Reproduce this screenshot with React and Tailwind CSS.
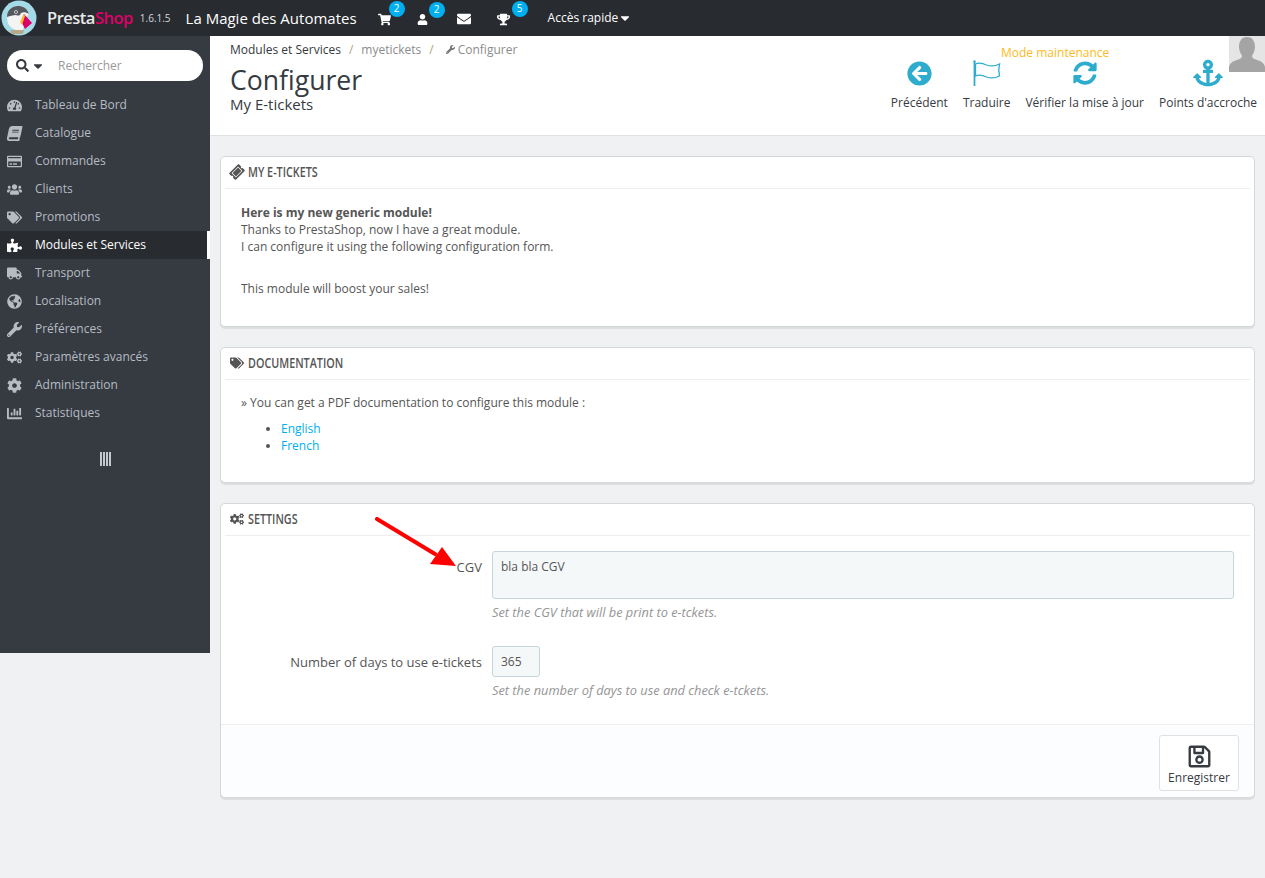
import {
  FaTachometerAlt, FaBook, FaRegCreditCard, FaUsers, FaTags, FaPuzzlePiece, FaTruck, FaGlobeAmericas,
  FaWrench, FaCogs, FaCog, FaChartBar, FaTicketAlt, FaArrowCircleLeft, FaSyncAlt, FaAnchor, FaRegSave,
  FaShoppingCart, FaUser, FaEnvelope, FaTrophy, FaSearch, FaCaretDown,
} from 'react-icons/fa';

const menu = [
  { label: 'Tableau de Bord', icon: FaTachometerAlt },
  { label: 'Catalogue', icon: FaBook, iconClass: '-skew-x-12' },
  { label: 'Commandes', icon: FaRegCreditCard },
  { label: 'Clients', icon: FaUsers },
  { label: 'Promotions', icon: FaTags },
  { label: 'Modules et Services', icon: FaPuzzlePiece, active: true },
  { label: 'Transport', icon: FaTruck },
  { label: 'Localisation', icon: FaGlobeAmericas },
  { label: 'Préférences', icon: FaWrench },
  { label: 'Paramètres avancés', icon: FaCogs },
  { label: 'Administration', icon: FaCog },
  { label: 'Statistiques', icon: FaChartBar },
];

const Logo = () => (
  <svg width="36" height="36" viewBox="0 0 36 36" className="shrink-0">
    <circle cx="18" cy="18" r="17.5" fill="#a4dbe8" />
    <path d="M6 18c0-8 5-12 11-12 6 0 10 3 11 8l-3 4-3 12c-8 2-16-3-16-12z" fill="#f4f4f4" />
    <path d="M6 17c0-7 5-11 11-11 5 0 9 2 11 8-3-2-6-2-8-1-1 3-3 3-5 2-3 0-6 1-9 2z" fill="#55585c" />
    <circle cx="15" cy="12" r="1.8" fill="#fff" />
    <circle cx="15" cy="12" r=".9" fill="#222" />
    <path d="M23 14l8 9-7 6-4-8z" fill="#df0067" />
    <path d="M23 14l-4 8 2 3 3-9z" fill="#fbbb22" />
    <path d="M9 30h14l-1 4H11z" fill="#b9a98a" />
  </svg>
);

const TopIcon = ({ icon: Icon, size, badge, badgeClass, className }) => (
  <div className={`relative mt-[2px] flex items-center ${className}`}>
    <Icon className="text-white" style={{ fontSize: size }} />
    {badge && (
      <span className={`absolute -top-[12px] flex h-4 w-4 items-center justify-center rounded-full bg-[#00aff0] text-[10px] text-white ${badgeClass}`}>
        {badge}
      </span>
    )}
  </div>
);

const ToolbarButton = ({ label, children }) => (
  <div className="flex flex-col items-center">
    <div className="flex h-[32px] items-center text-[#2eacce]">{children}</div>
    <span className="mt-[5px] text-[12px] leading-[17px] text-[#363a41]">{label}</span>
  </div>
);

const Panel = ({ icon: Icon, iconClass, title, children, className }) => (
  <section className={`rounded-[5px] border border-[#d3d8db] bg-white shadow-[0_2px_0_rgba(0,0,0,0.08)] ${className}`}>
    <h3 className="mx-[4px] flex h-[32px] items-center gap-[4px] border-b border-[#eeeeee] pb-[2px] pl-[5px] text-[14px] font-semibold uppercase text-[#555555]">
      <Icon className={`text-[14px] ${iconClass || ''}`} />
      <span className="origin-left scale-x-[0.77]">{title}</span>
    </h3>
    {children}
  </section>
);

export default function App() {
  return (
    <div className="flex min-h-[878px] flex-col overflow-hidden bg-[#eff1f2] text-[12px] text-[#555555] [font-family:'Open_Sans',sans-serif]">
      <header className="flex h-[36px] items-center bg-[#282b30] pl-px">
        <Logo />
        <span className="ml-[10px] text-[16.5px] font-semibold tracking-[-0.5px] text-[#e8e8e8]">
          Presta<span className="text-[#df0067]">Shop</span>
        </span>
        <span className="ml-[7px] text-[10px] text-[#d5d8dc]">1.6.1.5</span>
        <span className="ml-[15px] text-[15px] text-white">La Magie des Automates</span>
        <TopIcon icon={FaShoppingCart} size={13} badge="2" badgeClass="left-[11px]" className="ml-[21px] w-[39px]" />
        <TopIcon icon={FaUser} size={11} badge="2" badgeClass="left-[12px]" className="w-[40px]" />
        <TopIcon icon={FaEnvelope} size={14} className="w-[40px]" />
        <TopIcon icon={FaTrophy} size={13} badge="5" badgeClass="left-[15px]" className="w-[51px]" />
        <span className="flex items-center text-[12px] text-white">
          Accès rapide <FaCaretDown className="text-[14px]" />
        </span>
      </header>

      <div className="flex flex-1 items-start">
        <aside className="h-[617px] w-[210px] shrink-0 bg-[#363a41] pt-[14px]">
          <div className="mx-[7px] flex h-[31px] items-center rounded-full bg-white pl-[9px]">
            <FaSearch className="text-[13px] text-[#363a41]" />
            <FaCaretDown className="ml-[2px] text-[14px] text-[#363a41]" />
            <span className="ml-[13px] text-[12px] text-[#999999]">Rechercher</span>
          </div>
          <nav className="mt-[10px]">
            {menu.map(({ label, icon: Icon, iconClass, active }) => (
              <div
                key={label}
                className={`flex h-[28px] items-center ${active ? 'border-r-[3px] border-white bg-[#282b30] text-white' : 'text-[#b5bcc3]'}`}
              >
                <span className="flex w-[35px] justify-center pr-[6px]">
                  <Icon className={`text-[15px] ${active ? 'text-white' : 'text-[#b5bcc3]'} ${iconClass || ''}`} />
                </span>
                <span>{label}</span>
              </div>
            ))}
          </nav>
          <div className="mt-[25px] flex justify-center gap-px">
            <i className="h-[14px] w-[2px] bg-[#c4c9ce]" />
            <i className="h-[14px] w-[2px] bg-[#c4c9ce]" />
            <i className="h-[14px] w-[2px] bg-[#c4c9ce]" />
            <i className="h-[14px] w-[2px] bg-[#c4c9ce]" />
          </div>
        </aside>

        <main className="relative min-w-0 flex-1">
          <div className="relative flex h-[100px] justify-between border-b border-[#dfe2e4] bg-white pl-[20px] pr-[8px]">
            <div>
              <div className="flex items-center pt-[5px] text-[12px] leading-[17px] text-[#8c8c8c]">
                <span className="text-[#363a41]">Modules et Services</span>
                <span className="mx-[8px] text-[#a8a878]">/</span>
                <span>myetickets</span>
                <span className="ml-[8px] mr-[12px] text-[#a8a878]">/</span>
                <FaWrench className="mr-[3px] text-[9px] text-[#777777]" />
                <span>Configurer</span>
              </div>
              <h1 className="mt-[6px] text-[26.6px] leading-[32px] text-[#363a41]">Configurer</h1>
              <h2 className="text-[15px] leading-[16px] text-[#363a41]">My E-tickets</h2>
            </div>
            <div className="flex gap-[15px] pt-[21px]">
              <ToolbarButton label="Précédent">
                <FaArrowCircleLeft className="text-[25px]" />
              </ToolbarButton>
              <ToolbarButton label="Traduire">
                <svg width="28" height="26" viewBox="0 0 28 26" fill="none" stroke="currentColor">
                  <circle cx="1.5" cy="1.5" r="1.2" fill="currentColor" stroke="none" />
                  <path d="M1.5 2v24" strokeWidth="1.8" />
                  <path d="M2.5 4c4-2 7-1 11 1 4 1.500 8 1.500 13-1-1 4-1 8 0 12-5 2.500-9 2.500-13 1-4-2-7-3-11-1z" strokeWidth="1.3" />
                </svg>
              </ToolbarButton>
              <ToolbarButton label="Vérifier la mise à jour">
                <FaSyncAlt className="text-[24px]" />
              </ToolbarButton>
              <ToolbarButton label="Points d'accroche">
                <FaAnchor className="text-[30px]" />
              </ToolbarButton>
            </div>
            <span className="absolute left-[791px] top-[8px] text-[12px] leading-[17px] text-[#fbbb22]">Mode maintenance</span>
            <div className="absolute right-0 top-0 flex h-[36px] w-[36px] items-end justify-center overflow-hidden bg-[#e5e5e5]">
              <svg width="36" height="36" viewBox="0 0 36 36" fill="#a4a4a4">
                <path d="M18 1c6 0 8 5 8 10 0 4-2 7-3 9 0 2 2 3 5 4 4 1 7 3 8 7v5H0v-5c1-4 4-6 8-7 3-1 5-2 5-4-1-2-3-5-3-9 0-5 2-10 8-10z" />
              </svg>
            </div>
          </div>

          <div className="flex flex-col gap-[20px] px-[10px] pt-[20px]">
            <Panel icon={FaTicketAlt} iconClass="-rotate-45" title="My E-tickets" className="h-[171px]">
              <div className="px-[20px] pt-[15px] leading-[17px]">
                <p className="font-bold">Here is my new generic module!</p>
                <p>Thanks to PrestaShop, now I have a great module.</p>
                <p>I can configure it using the following configuration form.</p>
                <p className="mt-[25px]">This module will boost your sales!</p>
              </div>
            </Panel>

            <Panel icon={FaTags} title="Documentation" className="h-[136px]">
              <div className="px-[20px] pt-[14px] leading-[17px]">
                <p>» You can get a PDF documentation to configure this module :</p>
                <ul className="mt-[9px] list-disc pl-[40px] text-[#00aff0] marker:text-[#555555]">
                  <li>English</li>
                  <li>French</li>
                </ul>
              </div>
            </Panel>

            <Panel icon={FaCogs} title="Settings" className="relative h-[295px]">
              <div className="flex pt-[15px]">
                <label className="w-[261px] pt-[8px] text-right text-[13px] leading-[17px]">CGV</label>
                <div className="ml-[10px] flex-1 pr-[20px]">
                  <div className="h-[48px] rounded-[3px] border border-[#c7d6db] bg-[#f5f8f9] px-[8px] py-[6px] leading-[17px]">bla bla CGV</div>
                  <p className="mt-[5px] text-[12.8px] italic leading-[17px] text-[#959595]">Set the CGV that will be print to e-tckets.</p>
                </div>
              </div>
              <div className="flex pt-[25px]">
                <label className="w-[261px] pt-[8px] text-right text-[13px] leading-[17px]">Number of days to use e-tickets</label>
                <div className="ml-[10px] flex-1">
                  <div className="h-[31px] w-[48px] rounded-[3px] border border-[#c7d6db] bg-[#f5f8f9] px-[8px] pt-[6px] leading-[17px]">365</div>
                  <p className="mt-[5px] whitespace-nowrap text-[12.8px] italic leading-[17px] text-[#959595]">Set the number of days to use and check e-tckets.</p>
                </div>
              </div>
              <div className="absolute inset-x-0 bottom-0 flex h-[73px] justify-end rounded-b-[5px] border-t border-[#eeeeee] bg-[#fcfdfe] pr-[15px] pt-[10px]">
                <div className="flex h-[56px] w-[80px] flex-col items-center rounded-[3px] border border-[#dfe2e4] bg-white pt-[8px] text-[#363a41]">
                  <FaRegSave className="text-[25px]" />
                  <span className="leading-[17px]">Enregistrer</span>
                </div>
              </div>
              <svg className="absolute left-[154px] top-[13px]" width="84" height="52" viewBox="0 0 84 52">
                <path d="M2 2L60 37" stroke="#ff0000" strokeWidth="4" strokeLinecap="round" />
                <path d="M81 49L55 47L67 30z" fill="#ff0000" />
              </svg>
            </Panel>
          </div>
        </main>
      </div>
    </div>
  );
}
